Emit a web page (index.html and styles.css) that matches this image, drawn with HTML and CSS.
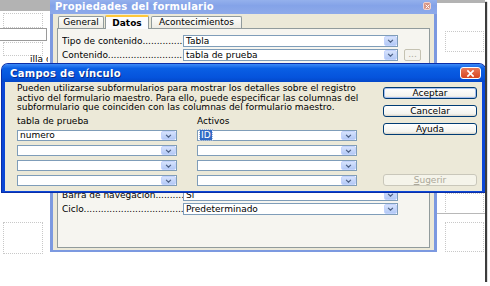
FILE: index.html
```html
<!DOCTYPE html>
<html>
<head>
    <meta charset="utf-8">
    <title>Campos de vínculo</title>
    <link rel="stylesheet" href="styles.css">
</head>
<body>
    <div class="shot">
        <!-- fondo: area de diseño del formulario -->
        <div class="strip strip-left"></div>
        <div class="strip strip-right"></div>
        <div class="ctl cell cell-a"></div>
        <div class="ctl cell cell-b"></div>
        <div class="ctl cell cell-c"></div>
        <div class="ctl cell cell-d"></div>
        <div class="ctl cell cell-e"></div>
        <div class="ctl cell cell-f"></div>
        <div class="ctl textbox"></div>
        <div class="ctl caption">illa de</div>
        <div class="ctl rule"></div>

        <!-- ventana de propiedades (inactiva) -->
        <div class="win back">
            <div class="titlebar">
                <span class="title">Propiedades del formulario</span>
                <span class="close small">
                    <svg viewBox="0 0 8 8" width="5" height="5"><path d="M1 1l6 6M7 1l-6 6" stroke="#fff" stroke-width="1.6"/></svg>
                </span>
            </div>
            <div class="client">
                <div class="tabs">
                    <div class="tab">General</div>
                    <div class="tab active">Datos</div>
                    <div class="tab">Acontecimientos</div>
                </div>
                <div class="sheet">
                    <div class="prop"><div class="lbl">Tipo de contenido..................................</div><div class="field">Tabla<span class="drop"><svg viewBox="0 0 8 5" width="7" height="4"><path d="M1 1l3 3 3-3" fill="none" stroke="#4d6185" stroke-width="1.5"/></svg></span></div></div>
                    <div class="prop"><div class="lbl">Contenido..............................................</div><div class="field">tabla de prueba<span class="drop"><svg viewBox="0 0 8 5" width="7" height="4"><path d="M1 1l3 3 3-3" fill="none" stroke="#4d6185" stroke-width="1.5"/></svg></span></div><div class="dots">...</div></div>
                    <div class="prop"><div class="lbl">Analizar comando SQL..............................</div><div class="field">Sí<span class="drop"><svg viewBox="0 0 8 5" width="7" height="4"><path d="M1 1l3 3 3-3" fill="none" stroke="#4d6185" stroke-width="1.5"/></svg></span></div></div>
                    <div class="prop"><div class="lbl">Filtro..................................................</div><div class="field"></div><div class="dots">...</div></div>
                    <div class="prop"><div class="lbl">Ordenar................................................</div><div class="field"></div><div class="dots">...</div></div>
                    <div class="prop"><div class="lbl">Enlazar de.............................................</div><div class="field"></div><div class="dots">...</div></div>
                    <div class="prop"><div class="lbl">Enlazar con............................................</div><div class="field"></div><div class="dots">...</div></div>
                    <div class="prop"><div class="lbl">Permitir agregar....................................</div><div class="field">Sí<span class="drop"><svg viewBox="0 0 8 5" width="7" height="4"><path d="M1 1l3 3 3-3" fill="none" stroke="#4d6185" stroke-width="1.5"/></svg></span></div></div>
                    <div class="prop"><div class="lbl">Permitir modificaciones..........................</div><div class="field">Sí<span class="drop"><svg viewBox="0 0 8 5" width="7" height="4"><path d="M1 1l3 3 3-3" fill="none" stroke="#4d6185" stroke-width="1.5"/></svg></span></div></div>
                    <div class="prop"><div class="lbl">Permitir eliminar...................................</div><div class="field">Sí<span class="drop"><svg viewBox="0 0 8 5" width="7" height="4"><path d="M1 1l3 3 3-3" fill="none" stroke="#4d6185" stroke-width="1.5"/></svg></span></div></div>
                    <div class="prop"><div class="lbl">Sólo agregar datos.................................</div><div class="field">No<span class="drop"><svg viewBox="0 0 8 5" width="7" height="4"><path d="M1 1l3 3 3-3" fill="none" stroke="#4d6185" stroke-width="1.5"/></svg></span></div></div>
                    <div class="prop"><div class="lbl">Barra de navegación..............................</div><div class="field">Sí<span class="drop"><svg viewBox="0 0 8 5" width="7" height="4"><path d="M1 1l3 3 3-3" fill="none" stroke="#4d6185" stroke-width="1.5"/></svg></span></div></div>
                    <div class="prop"><div class="lbl">Ciclo....................................................</div><div class="field">Predeterminado<span class="drop"><svg viewBox="0 0 8 5" width="7" height="4"><path d="M1 1l3 3 3-3" fill="none" stroke="#4d6185" stroke-width="1.5"/></svg></span></div></div>
                </div>
            </div>
        </div>

        <!-- dialogo activo -->
        <div class="win front">
            <div class="titlebar">
                <span class="title">Campos de vínculo</span>
                <span class="close">
                    <svg viewBox="0 0 10 10" width="9" height="9"><path d="M1.5 1.5l7 7M8.5 1.5l-7 7" stroke="#fff" stroke-width="1.8"/></svg>
                </span>
            </div>
            <div class="client">
                <div class="main">
                    <p class="intro">Pueden utilizarse subformularios para mostrar los detalles sobre el registro<br>activo del formulario maestro. Para ello, puede especificar las columnas del<br>subformulario que coinciden con las columnas del formulario maestro.</p>
                    <div class="links">
                        <div class="head">tabla de prueba</div>
                        <div class="head">Activos</div>
                        <div class="combo">numero<span class="drop"><svg viewBox="0 0 8 5" width="7" height="4"><path d="M1 1l3 3 3-3" fill="none" stroke="#4d6185" stroke-width="1.5"/></svg></span></div>
                        <div class="combo"><span class="sel">ID</span><span class="drop"><svg viewBox="0 0 8 5" width="7" height="4"><path d="M1 1l3 3 3-3" fill="none" stroke="#4d6185" stroke-width="1.5"/></svg></span></div>
                        <div class="combo"><span class="drop"><svg viewBox="0 0 8 5" width="7" height="4"><path d="M1 1l3 3 3-3" fill="none" stroke="#4d6185" stroke-width="1.5"/></svg></span></div>
                        <div class="combo"><span class="drop"><svg viewBox="0 0 8 5" width="7" height="4"><path d="M1 1l3 3 3-3" fill="none" stroke="#4d6185" stroke-width="1.5"/></svg></span></div>
                        <div class="combo"><span class="drop"><svg viewBox="0 0 8 5" width="7" height="4"><path d="M1 1l3 3 3-3" fill="none" stroke="#4d6185" stroke-width="1.5"/></svg></span></div>
                        <div class="combo"><span class="drop"><svg viewBox="0 0 8 5" width="7" height="4"><path d="M1 1l3 3 3-3" fill="none" stroke="#4d6185" stroke-width="1.5"/></svg></span></div>
                        <div class="combo"><span class="drop"><svg viewBox="0 0 8 5" width="7" height="4"><path d="M1 1l3 3 3-3" fill="none" stroke="#4d6185" stroke-width="1.5"/></svg></span></div>
                        <div class="combo"><span class="drop"><svg viewBox="0 0 8 5" width="7" height="4"><path d="M1 1l3 3 3-3" fill="none" stroke="#4d6185" stroke-width="1.5"/></svg></span></div>
                    </div>
                </div>
                <div class="buttons">
                    <button class="btn default">Aceptar</button>
                    <button class="btn">Cancelar</button>
                    <button class="btn">Ayuda</button>
                    <button class="btn disabled"><u>S</u>ugerir</button>
                </div>
            </div>
        </div>
    </div>
</body>
</html>
```

FILE: styles.css
```css
body {
    margin: 0;
    background: #fff;
    font-family: "DejaVu Sans", Verdana, sans-serif;
    font-size: 9px;
    color: #000;
}

.shot {
    position: relative;
    width: 485px;
    height: 282px;
    overflow: hidden;
    background: #fff;
    box-shadow: 2px 2px 1px #3c3c3c;
}

/* area de diseño */
.strip {
    position: absolute;
    top: 0;
    background: #b3b3b3;
}

.strip-left {
    left: 0;
    width: 50px;
    height: 11px;
}

.strip-right {
    left: 437px;
    width: 48px;
    height: 3px;
}

.ctl {
    position: absolute;
}

.cell {
    border: 1px dotted #c8c8c8;
}

.cell-a { left: 3px; top: 13px; width: 38px; height: 13px; }
.cell-b { left: 3px; top: 42px; width: 38px; height: 12px; }
.cell-c { left: 3px; top: 222px; width: 38px; height: 30px; }
.cell-d { left: 445px; top: 31px; width: 37px; height: 19px; }
.cell-e { left: 445px; top: 193px; width: 37px; height: 19px; }
.cell-f { left: 445px; top: 222px; width: 37px; height: 28px; }

.textbox {
    left: -2px;
    top: 28px;
    width: 47px;
    height: 11px;
    background: #fff;
    border: 1px solid #9a9a9a;
}

.caption {
    left: 30px;
    top: 54px;
    width: 18px;
    overflow: hidden;
    white-space: nowrap;
}

.rule {
    left: 437px;
    top: 213px;
    width: 48px;
    border-top: 1px solid #b8b8b8;
}

/* ventanas */
.win {
    position: absolute;
    display: flex;
    flex-direction: column;
    box-sizing: border-box;
}

.titlebar {
    display: flex;
    align-items: center;
    justify-content: space-between;
    color: #fff;
    font-weight: bold;
    flex-shrink: 0;
}

.close {
    display: flex;
    align-items: center;
    justify-content: center;
    box-sizing: border-box;
}

.client {
    flex: 1;
    background: #ece9d8;
}

.back {
    left: 50px;
    top: -7px;
    width: 387px;
    height: 259px;
    border: 3px solid #7c99e0;
    border-top: 0;
    border-bottom-width: 2px;
}

.back .titlebar {
    height: 21px;
    margin: 0 -3px;
    padding: 5px 6px 0 5px;
    box-sizing: border-box;
    background: linear-gradient(#a9c2f2, #84a3e8 60%, #8eaaea);
    font-size: 10px;
    letter-spacing: 0.2px;
}

.back .close.small {
    width: 8px;
    height: 8px;
    border: 1px solid #f1d3cf;
    border-radius: 2px;
    background: #d89585;
}

.back .client {
    display: flex;
    flex-direction: column;
    padding: 1px 4px 2px 4px;
}

.tabs {
    display: flex;
    align-items: flex-end;
    height: 13px;
    padding-left: 1px;
    gap: 1px;
}

.tab {
    box-sizing: border-box;
    height: 12px;
    line-height: 11px;
    text-align: center;
    background: linear-gradient(#fdfdfb, #ecebe4);
    border: 1px solid #919b9c;
    border-bottom: 0;
    border-radius: 2px 2px 0 0;
}

.tab:first-child { width: 46px; }
.tab:nth-child(3) { width: 91px; margin-left: 1px; }

.tab.active {
    width: 44px;
    height: 14px;
    line-height: 12px;
    font-weight: bold;
    background: #fcfcfe;
    border-top: 2px solid #ffc83c;
    margin-bottom: -1px;
    position: relative;
}

.sheet {
    flex: 1;
    background: #f6f5f0;
    border: 1px solid #919b9c;
    padding: 6px 0 0 4px;
    display: flex;
    flex-direction: column;
    gap: 2px;
    overflow: hidden;
}

.prop {
    display: grid;
    grid-template-columns: 121px 215px 17px;
    column-gap: 0;
    height: 12px;
}

.lbl {
    white-space: nowrap;
    overflow: hidden;
    line-height: 12px;
    padding-right: 2px;
}

.field,
.combo {
    position: relative;
    box-sizing: border-box;
    height: 12px;
    background: #fff;
    border: 1px solid #7f9db9;
    padding-left: 2px;
    line-height: 10px;
    white-space: nowrap;
}

.drop {
    position: absolute;
    top: 0;
    right: 0;
    bottom: 0;
    width: 13px;
    box-sizing: border-box;
    border: 1px solid #c3d3fd;
    border-radius: 2px;
    background: linear-gradient(#d6e2fc, #b3c9f6);
    display: flex;
    align-items: center;
    justify-content: center;
}

.dots {
    box-sizing: border-box;
    height: 12px;
    margin-left: 6px;
    width: 17px;
    border: 1px solid #c5c2b2;
    border-radius: 2px;
    background: #f4f3ee;
    color: #aca899;
    text-align: center;
    line-height: 8px;
}

/* dialogo activo */
.front {
    left: 2px;
    top: 64px;
    width: 483px;
    height: 128px;
    border: 3px solid #0b47d6;
    border-top: 0;
    border-radius: 6px 6px 0 0;
    box-shadow: 0 0 0 1px #0a2ea8;
}

.front .titlebar {
    height: 18px;
    margin: 0 -3px;
    padding: 0 4px 0 8px;
    box-sizing: border-box;
    border-radius: 6px 6px 0 0;
    background: linear-gradient(#3d8af7, #0a5fe4 25%, #0553dc 75%, #0447c8);
    font-size: 10px;
    letter-spacing: 0.3px;
    text-shadow: 1px 1px 0 #0a2a8a;
}

.front .close {
    width: 21px;
    height: 12px;
    border: 1px solid #fff;
    border-radius: 3px;
    background: linear-gradient(#e8795a, #d8451f);
}

.front .client {
    display: grid;
    grid-template-columns: 352px 94px;
    column-gap: 14px;
    padding: 2px 5px 5px 12px;
}

.main {
    display: flex;
    flex-direction: column;
}

.intro {
    margin: 0;
    white-space: nowrap;
    line-height: 9.7px;
}

.links {
    display: grid;
    grid-template-columns: 160px 160px;
    column-gap: 20px;
    row-gap: 4px;
    margin-top: 3px;
}

.head {
    height: 11px;
    line-height: 11px;
    margin-bottom: -1px;
}

.combo {
    height: 11px;
    line-height: 9px;
}

.combo .drop {
    width: 15px;
}

.sel {
    background: #316ac5;
    color: #fff;
    padding: 0 1px;
    outline: 1px dotted #9fb6e0;
}

.buttons {
    display: flex;
    flex-direction: column;
    gap: 6px;
    padding-top: 3px;
}

.btn {
    height: 12px;
    padding: 0;
    font-family: inherit;
    font-size: 9px;
    line-height: 9px;
    color: #000;
    background: linear-gradient(#ffffff, #f3f3ee 80%, #d6d0c5);
    border: 1px solid #003c74;
    border-radius: 3px;
}

.btn.default {
    box-shadow: inset 0 0 0 1px #a5bff0;
}

.btn.disabled {
    margin-top: auto;
    color: #aca899;
    background: #f5f4ea;
    border-color: #c9c7ba;
}
```
